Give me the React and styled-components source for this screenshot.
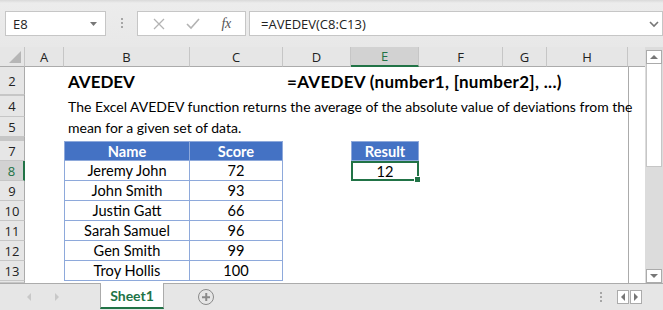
import React from 'react';
import styled, { createGlobalStyle, css } from 'styled-components';

const GlobalStyle = createGlobalStyle`
  html, body {
    margin: 0;
    padding: 0;
    width: 663px;
    height: 310px;
    overflow: hidden;
    background: #e6e6e6;
  }
`;

const GREEN = '#217346';

const Window = styled.div`
  width: 663px;
  height: 310px;
  display: flex;
  flex-direction: column;
  background: #e6e6e6;
  font-family: 'Open Sans', 'Noto Sans', sans-serif;
`;

const FormulaBar = styled.div`
  height: 47px;
  box-sizing: border-box;
  display: flex;
  align-items: flex-start;
  padding: 11px 0 0 5px;
  background: linear-gradient(#d9d9d9 0, #ececec 3px, #e8e8e8 100%);
`;

const Box = styled.div`
  height: 25px;
  box-sizing: border-box;
  background: #fff;
  border: 1px solid #c6c6c6;
  display: flex;
  align-items: center;
  width: ${p => p.w}px;
  margin-left: ${p => p.ml || 0}px;
  flex: ${p => (p.grow ? 1 : 'none')};
`;

const BoxText = styled.span`
  font-family: 'Open Sans', sans-serif;
  font-size: 13px;
  color: #222;
  padding-left: ${p => p.pl}px;
  flex: 1;
`;

const Grip = styled.div`
  width: 2px;
  margin: 7px 0 0 15px;
  display: flex;
  flex-direction: column;
  gap: 2px;
  span {
    width: 2px;
    height: 2px;
    background: #a6a6a6;
  }
`;

const IconSlot = styled.div`
  width: ${p => p.w}px;
  display: flex;
  justify-content: center;
  align-items: center;
`;

const Fx = styled.span`
  font-family: 'Liberation Serif', serif;
  font-style: italic;
  font-size: 14px;
  color: #555;
  letter-spacing: -0.5px;
`;

const Sheet = styled.div`
  height: 236px;
  display: flex;
`;

const Grid = styled.div`
  width: 645px;
  display: grid;
  grid-template-columns: 25px 39px 126px 93px 68px 68px 84px 44px 81px 17px;
  grid-template-rows: 20px 28px 1px 21px 20px 4px repeat(7, 20px) 2px;
  background: #fff;
`;

const ColHead = styled.div`
  grid-row: 1;
  background: ${p => (p.active ? '#d2d2d2' : '#e6e6e6')};
  border-right: 1px solid ${p => (p.last ? 'transparent' : '#c6c6c6')};
  border-bottom: ${p => (p.active ? `2px solid ${GREEN}` : '1px solid #ababab')};
  box-sizing: border-box;
  display: flex;
  align-items: center;
  justify-content: center;
  font-size: 13px;
  color: ${p => (p.active ? GREEN : '#222')};
`;

const Corner = styled.div`
  grid-row: 1;
  grid-column: 1;
  background: #e6e6e6;
  border-right: 1px solid #c6c6c6;
  border-bottom: 1px solid #ababab;
  box-sizing: border-box;
  position: relative;
  &::after {
    content: '';
    position: absolute;
    right: 3px;
    bottom: 3px;
    border-style: solid;
    border-width: 0 0 12px 12px;
    border-color: transparent transparent #b6b6b6 transparent;
  }
`;

const RowHead = styled.div`
  grid-column: 1;
  grid-row: ${p => p.r};
  background: ${p => (p.active ? '#d2d2d2' : '#e6e6e6')};
  border-bottom: 1px solid #c6c6c6;
  border-right: ${p => (p.active ? `2px solid ${GREEN}` : '1px solid #ababab')};
  box-sizing: border-box;
  display: flex;
  align-items: center;
  justify-content: center;
  font-size: 13px;
  color: ${p => (p.active ? GREEN : '#222')};
  ${p =>
    p.hidden &&
    css`
      background: #c6c6c6;
      border-bottom: 0;
    `}
`;

const Cell = styled.div`
  grid-row: ${p => p.r};
  grid-column: ${p => p.c};
  font-family: 'Lato', sans-serif;
  font-size: 14px;
  color: #000;
  display: flex;
  align-items: center;
  white-space: nowrap;
  box-sizing: border-box;
  padding-left: 4px;
  ${p =>
    p.bold &&
    css`
      font-weight: 700;
      font-size: 17px;
      letter-spacing: ${p.spread || 0}px;
    `}
`;

const TableCell = styled.div`
  grid-row: ${p => p.r};
  grid-column: ${p => p.c};
  font-family: 'Lato', sans-serif;
  font-size: 14.6px;
  display: flex;
  align-items: center;
  justify-content: center;
  box-sizing: border-box;
  border-right: 1px solid #8ea9db;
  border-bottom: 1px solid #8ea9db;
  ${p =>
    p.first &&
    css`
      border-left: 1px solid #8ea9db;
    `}
  ${p =>
    p.head
      ? css`
          background: #4472c4;
          color: #fff;
          font-weight: 700;
          border-top: 1px solid #8ea9db;
        `
      : css`
          color: #000;
        `}
  ${p =>
    p.selected &&
    css`
      border: 2px solid ${GREEN};
      position: relative;
      &::after {
        content: '';
        position: absolute;
        right: -4px;
        bottom: -4px;
        width: 5px;
        height: 5px;
        background: ${GREEN};
        border: 1px solid #fff;
      }
    `}
`;

const GridEdge = styled.div`
  grid-column: 10;
  grid-row: 2 / -1;
  border-left: 1px solid #ababab;
  background: #fff;
`;

const HeadFill = styled.div`
  grid-column: 10;
  grid-row: 1;
  background: #e6e6e6;
  border-bottom: 1px solid #ababab;
`;

const VScroll = styled.div`
  width: 18px;
  display: flex;
  flex-direction: column;
  background: #dcdcdc;
  padding: 3px 1px 0 1px;
  box-sizing: border-box;
`;

const ScrollBtn = styled.div`
  height: 14px;
  box-sizing: border-box;
  background: #fff;
  border: 1px solid #ababab;
  display: flex;
  align-items: center;
  justify-content: center;
  margin-top: ${p => (p.bottom ? 'auto' : 0)};
  &::before {
    content: '';
    border-left: 4px solid transparent;
    border-right: 4px solid transparent;
    ${p =>
      p.bottom
        ? css`border-top: 4px solid #777;`
        : css`border-bottom: 4px solid #777;`}
  }
`;

const Thumb = styled.div`
  height: 103px;
  background: #fff;
  border: 1px solid #c6c6c6;
  border-top: 0;
  box-sizing: border-box;
`;

const TabBar = styled.div`
  flex: 1;
  display: flex;
  align-items: stretch;
  border-top: 1px solid #ababab;
  background: #e6e6e6;
`;

const NavArrow = styled.div`
  width: 28px;
  display: flex;
  align-items: center;
  justify-content: center;
  &::before {
    content: '';
    border-top: 4px solid transparent;
    border-bottom: 4px solid transparent;
    ${p =>
      p.right
        ? css`border-left: 4px solid #c8c8c8;`
        : css`border-right: 4px solid #c8c8c8;`}
  }
`;

const Tab = styled.div`
  width: 64px;
  margin-left: 29px;
  box-sizing: border-box;
  background: #fff;
  border-left: 1px solid #ababab;
  border-right: 1px solid #ababab;
  border-bottom: 2px solid ${GREEN};
  margin-bottom: 1px;
  margin-top: -1px;
  display: flex;
  align-items: center;
  justify-content: center;
  font-family: 'Lato', sans-serif;
  font-weight: 700;
  font-size: 14px;
  color: ${GREEN};
`;

const AddSheet = styled.div`
  margin-left: 34px;
  align-self: center;
  width: 14px;
  height: 14px;
  border: 1.5px solid #8a8a8a;
  border-radius: 50%;
  position: relative;
  &::before,
  &::after {
    content: '';
    position: absolute;
    background: #8a8a8a;
    left: 50%;
    top: 50%;
    transform: translate(-50%, -50%);
  }
  &::before {
    width: 8px;
    height: 1.5px;
  }
  &::after {
    width: 1.5px;
    height: 8px;
  }
`;

const RightNav = styled.div`
  margin-left: auto;
  margin-right: 21px;
  display: flex;
  align-items: center;
`;

const HBtn = styled.div`
  width: 12px;
  height: 14px;
  box-sizing: border-box;
  background: #fff;
  border: 1px solid #ababab;
  margin-left: 1px;
  display: flex;
  align-items: center;
  justify-content: center;
  &::before {
    content: '';
    border-top: 4px solid transparent;
    border-bottom: 4px solid transparent;
    ${p =>
      p.right
        ? css`border-left: 4px solid #777;`
        : css`border-right: 4px solid #777;`}
  }
`;

const columns = ['A', 'B', 'C', 'D', 'E', 'F', 'G', 'H', ''];
const rows = [
  { r: 2, label: '2' },
  { r: 3, hidden: true },
  { r: 4, label: '4' },
  { r: 5, label: '5' },
  { r: 6, hidden: true },
  { r: 7, label: '7' },
  { r: 8, label: '8', active: true },
  { r: 9, label: '9' },
  { r: 10, label: '10' },
  { r: 11, label: '11' },
  { r: 12, label: '12' },
  { r: 13, label: '13' },
  { r: 14, label: '' },
];

const data = [
  ['Jeremy John', 72],
  ['John Smith', 93],
  ['Justin Gatt', 66],
  ['Sarah Samuel', 96],
  ['Gen Smith', 99],
  ['Troy Hollis', 100],
];

export default function App() {
  return (
    <Window>
      <GlobalStyle />
      <FormulaBar>
        <Box w={101}>
          <BoxText pl={7}>E8</BoxText>
          <svg width="18" height="10" viewBox="0 0 18 10">
            <path d="M3 3h7l-3.5 4z" fill="#777" />
          </svg>
        </Box>
        <Grip>
          <span />
          <span />
          <span />
        </Grip>
        <Box w={109} ml={14}>
          <IconSlot w={42}>
            <svg width="12" height="12" viewBox="0 0 12 12">
              <path d="M1 1l10 10M11 1L1 11" stroke="#b3b3b3" strokeWidth="1.3" />
            </svg>
          </IconSlot>
          <IconSlot w={28}>
            <svg width="14" height="12" viewBox="0 0 14 12">
              <path d="M1 6l4 4 8-9" stroke="#b3b3b3" strokeWidth="1.6" fill="none" />
            </svg>
          </IconSlot>
          <IconSlot w={38}>
            <Fx>fx</Fx>
          </IconSlot>
        </Box>
        <Box grow ml={3}>
          <BoxText pl={11}>=AVEDEV(C8:C13)</BoxText>
          <svg width="16" height="10" viewBox="0 0 16 10">
            <path d="M4 3l4 4 4-4" stroke="#777" strokeWidth="1.6" fill="none" />
          </svg>
        </Box>
      </FormulaBar>

      <Sheet>
        <Grid>
          <Corner />
          {columns.map((c, i) => (
            <ColHead key={i} style={{ gridColumn: i + 2 }} active={c === 'E'} last={c === ''}>
              {c}
            </ColHead>
          ))}
          <HeadFill />
          {rows.map(row => (
            <RowHead key={row.r} r={row.r} hidden={row.hidden} active={row.active}>
              {row.label}
            </RowHead>
          ))}
          <GridEdge />

          <Cell r={2} c="3 / 5" bold>
            AVEDEV
          </Cell>
          <Cell r={2} c="5 / 10" bold spread={0.3}>
            =AVEDEV (number1, [number2], ...)
          </Cell>
          <Cell r={4} c="3 / 10">
            The Excel AVEDEV function returns the average of the absolute value of deviations from the
          </Cell>
          <Cell r={5} c="3 / 10">
            mean for a given set of data.
          </Cell>

          <TableCell r={7} c={3} head first>
            Name
          </TableCell>
          <TableCell r={7} c={4} head>
            Score
          </TableCell>
          {data.map(([name, score], i) => (
            <React.Fragment key={name}>
              <TableCell r={8 + i} c={3} first>
                {name}
              </TableCell>
              <TableCell r={8 + i} c={4}>
                {score}
              </TableCell>
            </React.Fragment>
          ))}

          <TableCell r={7} c={6} head first>
            Result
          </TableCell>
          <TableCell r={8} c={6} selected>
            12
          </TableCell>
        </Grid>
        <VScroll>
          <ScrollBtn />
          <Thumb />
          <ScrollBtn bottom />
        </VScroll>
      </Sheet>

      <TabBar>
        <NavArrow style={{ marginLeft: 15 }} />
        <NavArrow right />
        <Tab>Sheet1</Tab>
        <AddSheet />
        <RightNav>
          <Grip style={{ margin: '0 14px 0 0' }}>
            <span />
            <span />
            <span />
          </Grip>
          <HBtn />
          <HBtn right />
        </RightNav>
      </TabBar>
    </Window>
  );
}
